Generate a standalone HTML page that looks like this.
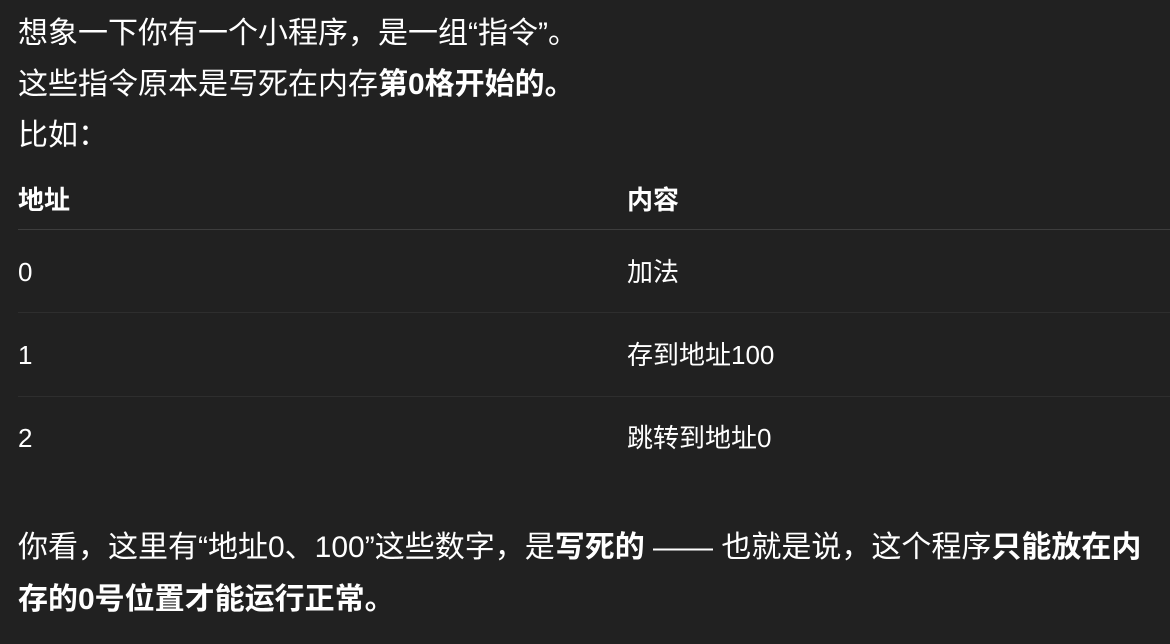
<!DOCTYPE html>
<html><head><meta charset="utf-8"><style>
html,body{margin:0;background:#212121;}
body{width:1170px;height:644px;overflow:hidden;color:#fff;font-family:"Liberation Sans","Noto Sans CJK SC",sans-serif;}
.p{position:absolute;left:18px;font-size:30px;line-height:51px;white-space:nowrap}
b{font-weight:bold}
.th{position:absolute;top:183px;font-size:26px;font-weight:bold;line-height:34px}
.td{position:absolute;font-size:26px;line-height:34px}
.line{position:absolute;left:18px;width:1152px;height:1px}
</style></head><body>
<div class="p" style="top:8px">想象一下你有一个小程序，是一组“指令”。<br>这些指令原本是写死在内存<b>第0格开始的。</b><br>比如：</div>
<div class="th" style="left:18px">地址</div><div class="th" style="left:627px">内容</div>
<div class="line" style="top:229px;background:#3d3d3d"></div>
<div class="td" style="left:18px;top:255px">0</div><div class="td" style="left:627px;top:255px">加法</div>
<div class="line" style="top:312px;background:#2e2e2e"></div>
<div class="td" style="left:18px;top:338px">1</div><div class="td" style="left:627px;top:338px">存到地址100</div>
<div class="line" style="top:396px;background:#2e2e2e"></div>
<div class="td" style="left:18px;top:421px">2</div><div class="td" style="left:627px;top:421px">跳转到地址0</div>
<div class="p" style="top:522px;line-height:52px">你看，这里有“地址0、100”这些数字，是<b>写死的</b> —— 也就是说，这个程序<b>只能放在内<br>存的0号位置才能运行正常。</b></div>
</body></html>
